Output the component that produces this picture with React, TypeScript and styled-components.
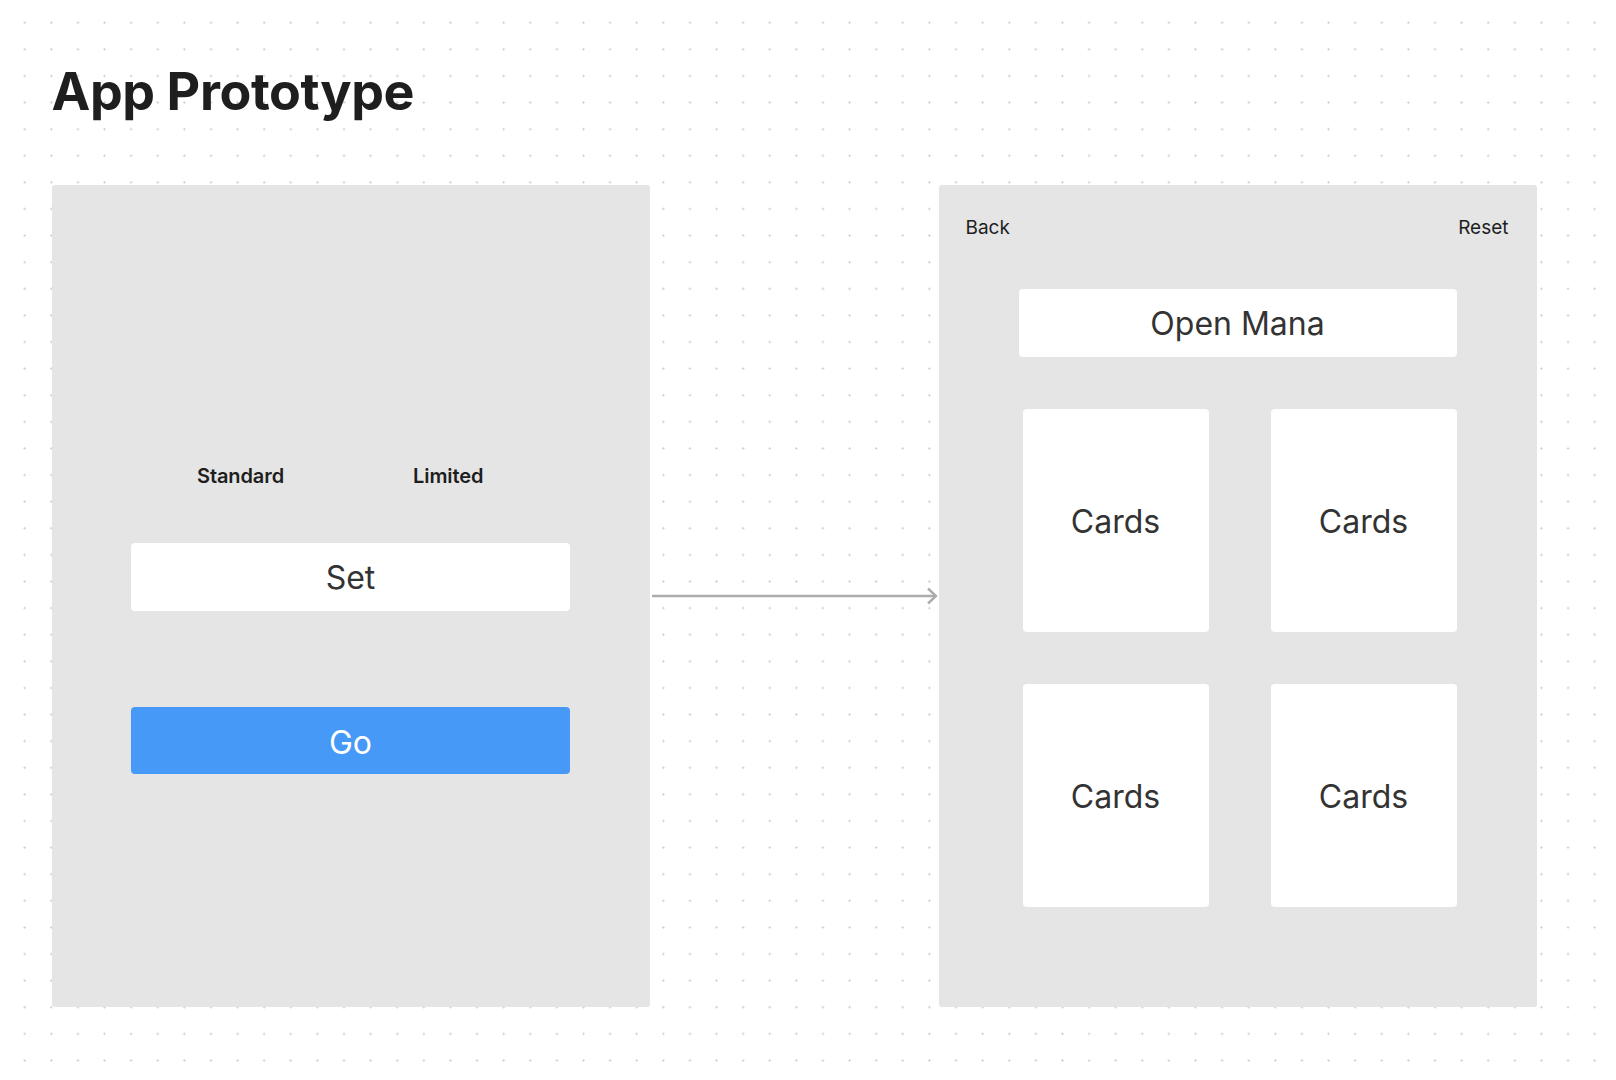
import React from 'react';
import styled, {createGlobalStyle} from 'styled-components';

const GlobalStyle = createGlobalStyle`
  html, body {
    margin: 0;
    padding: 0;
    background-color: #ffffff;
    background-image: radial-gradient(circle, #cfcfcf 0.9px, transparent 1.3px);
    background-size: 26.61px 26.61px;
    background-position: 11.4px 9.4px;
    font-family: Inter, 'Noto Sans', sans-serif;
    color: #1e1e1e;
  }
  #root {
    min-height: 1080px;
  }
`;

const Page = styled.div`
  padding: 60px 0 0 51.5px;
`;

const Title = styled.h1`
  margin: 0;
  font-size: 52px;
  font-weight: 700;
  line-height: 63px;
  letter-spacing: -0.4px;
  color: #1e1e1e;
`;

const Board = styled.div`
  display: flex;
  margin-top: 62px;
  height: 822px;
`;

const Frame = styled.div`
  width: 598px;
  background: #e5e5e5;
  border-radius: 3px;
  display: flex;
  flex-direction: column;
  box-sizing: border-box;
`;

const SetupFrame = styled(Frame)`
  padding-top: 279px;
  align-items: center;
`;

const Tabs = styled.div`
  align-self: flex-start;
  display: flex;
  gap: 129px;
  padding-left: 145.5px;
  font-size: 20px;
  font-weight: 600;
  line-height: 24px;
  letter-spacing: -0.1px;
  color: #1e1e1e;
`;

const Field = styled.div<{$top: number}>`
  width: 439px;
  height: 68px;
  margin-top: ${p => p.$top}px;
  background: #ffffff;
  border-radius: 4px;
  display: flex;
  align-items: center;
  justify-content: center;
  font-size: 32px;
  color: #333333;
`;

const GoButton = styled.div`
  width: 439px;
  height: 67px;
  margin-top: 96px;
  padding-top: 3px;
  box-sizing: border-box;
  background: #4799f7;
  border-radius: 4px;
  display: flex;
  align-items: center;
  justify-content: center;
  font-size: 32px;
  color: #ffffff;
`;

const Connector = styled.div`
  width: 289px;
  display: flex;
  align-items: center;
  padding-left: 2px;
  box-sizing: border-box;
`;

const ResultFrame = styled(Frame)`
  padding-top: 31px;
`;

const Header = styled.div`
  display: flex;
  justify-content: space-between;
  padding: 0 28px 0 27px;
  font-size: 19px;
  line-height: 23px;
  color: #1e1e1e;
`;

const ManaBox = styled(Field)`
  width: 438px;
  margin-left: 80px;
`;

const CardGrid = styled.div`
  display: grid;
  grid-template-columns: 186px 186px;
  column-gap: 62px;
  row-gap: 52px;
  margin: 52px 0 0 84px;
`;

const Card = styled.div`
  height: 223px;
  padding-top: 2px;
  box-sizing: border-box;
  background: #ffffff;
  border-radius: 4px;
  display: flex;
  align-items: center;
  justify-content: center;
  font-size: 32px;
  color: #333333;
`;

function Arrow() {
  return (
    <svg width="286" height="20" viewBox="0 0 286 20">
      <line x1="0" y1="10" x2="284" y2="10" stroke="#acacac" strokeWidth="2.4" />
      <polyline
        points="276,2.5 284,10 276,17.5"
        fill="none"
        stroke="#acacac"
        strokeWidth="2.4"
      />
    </svg>
  );
}

export default function App() {
  return (
    <>
      <GlobalStyle />
      <Page>
        <Title>App Prototype</Title>
        <Board>
          <SetupFrame>
            <Tabs>
              <span>Standard</span>
              <span>Limited</span>
            </Tabs>
            <Field $top={55}>Set</Field>
            <GoButton>Go</GoButton>
          </SetupFrame>
          <Connector>
            <Arrow />
          </Connector>
          <ResultFrame>
            <Header>
              <span>Back</span>
              <span>Reset</span>
            </Header>
            <ManaBox $top={50}>Open Mana</ManaBox>
            <CardGrid>
              <Card>Cards</Card>
              <Card>Cards</Card>
              <Card>Cards</Card>
              <Card>Cards</Card>
            </CardGrid>
          </ResultFrame>
        </Board>
      </Page>
    </>
  );
}
